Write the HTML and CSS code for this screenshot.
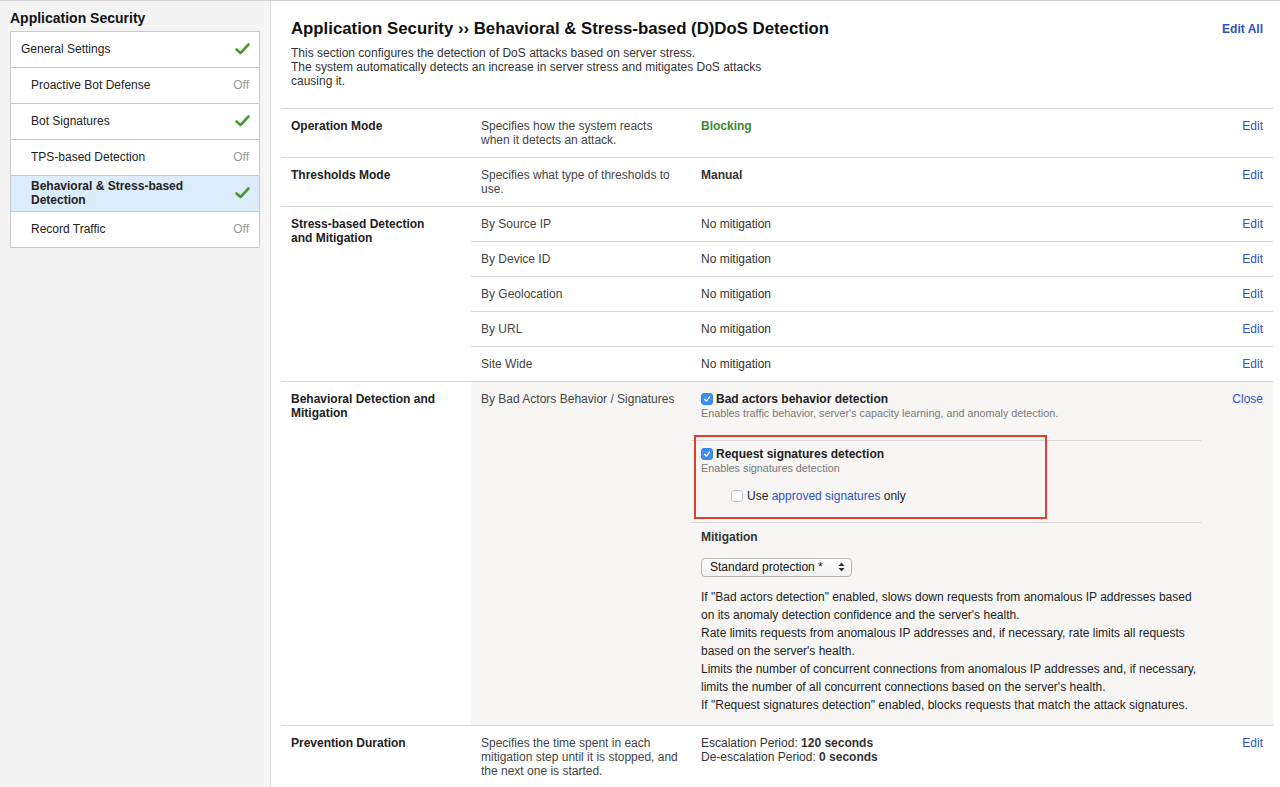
FILE: index.html
```html
<!DOCTYPE html>
<html>
<head>
<meta charset="utf-8">
<link rel="stylesheet" href="styles.css">
</head>
<body>
<div class="page">
  <aside class="sidebar">
    <h2 class="side-title">Application Security</h2>
    <ul class="nav">
      <li class="nav-item top"><span>General Settings</span><svg class="check" viewBox="0 0 15 12"><path d="M1.5 6.5 L5.5 10 L13.5 1.5"/></svg></li>
      <li class="nav-item"><span>Proactive Bot Defense</span><span class="off">Off</span></li>
      <li class="nav-item"><span>Bot Signatures</span><svg class="check" viewBox="0 0 15 12"><path d="M1.5 6.5 L5.5 10 L13.5 1.5"/></svg></li>
      <li class="nav-item"><span>TPS-based Detection</span><span class="off">Off</span></li>
      <li class="nav-item active"><span>Behavioral &amp; Stress-based<br>Detection</span><svg class="check" viewBox="0 0 15 12"><path d="M1.5 6.5 L5.5 10 L13.5 1.5"/></svg></li>
      <li class="nav-item"><span>Record Traffic</span><span class="off">Off</span></li>
    </ul>
  </aside>
  <main class="main">
    <header class="header">
      <div class="header-top">
        <h1 class="title">Application Security ›› Behavioral &amp; Stress-based (D)DoS Detection</h1>
        <a class="link bold">Edit All</a>
      </div>
      <p class="intro">This section configures the detection of DoS attacks based on server stress.<br>The system automatically detects an increase in server stress and mitigates DoS attacks causing it.</p>
    </header>
    <table class="settings">
      <colgroup><col class="c1"><col class="c2"><col class="c3"><col class="c4"></colgroup>
      <tr>
        <td class="label">Operation Mode</td>
        <td class="desc">Specifies how the system reacts when it detects an attack.</td>
        <td class="val"><span class="green bold">Blocking</span></td>
        <td class="act"><a class="link">Edit</a></td>
      </tr>
      <tr>
        <td class="label">Thresholds Mode</td>
        <td class="desc">Specifies what type of thresholds to use.</td>
        <td class="val"><span class="bold">Manual</span></td>
        <td class="act"><a class="link">Edit</a></td>
      </tr>
      <tr>
        <td class="label" rowspan="5">Stress-based Detection and Mitigation</td>
        <td class="desc">By Source IP</td>
        <td class="val">No mitigation</td>
        <td class="act"><a class="link">Edit</a></td>
      </tr>
      <tr>
        <td class="desc">By Device ID</td>
        <td class="val">No mitigation</td>
        <td class="act"><a class="link">Edit</a></td>
      </tr>
      <tr>
        <td class="desc">By Geolocation</td>
        <td class="val">No mitigation</td>
        <td class="act"><a class="link">Edit</a></td>
      </tr>
      <tr>
        <td class="desc">By URL</td>
        <td class="val">No mitigation</td>
        <td class="act"><a class="link">Edit</a></td>
      </tr>
      <tr>
        <td class="desc">Site Wide</td>
        <td class="val">No mitigation</td>
        <td class="act"><a class="link">Edit</a></td>
      </tr>
      <tr class="expanded">
        <td class="label">Behavioral Detection and Mitigation</td>
        <td class="desc shaded">By Bad Actors Behavior / Signatures</td>
        <td class="val shaded panel">
          <div class="sec sec1">
            <div class="cb-line"><span class="cb on"><svg viewBox="0 0 12 12"><path d="M3 6.3 L5.2 8.5 L9.2 3.5"/></svg></span><span class="bold">Bad actors behavior detection</span></div>
            <div class="hint">Enables traffic behavior, server's capacity learning, and anomaly detection.</div>
          </div>
          <div class="sec sec2">
            <div class="highlight"></div>
            <div class="cb-line"><span class="cb on"><svg viewBox="0 0 12 12"><path d="M3 6.3 L5.2 8.5 L9.2 3.5"/></svg></span><span class="bold">Request signatures detection</span></div>
            <div class="hint">Enables signatures detection</div>
            <div class="cb-line sub"><span class="cb"></span><span>Use <a class="link">approved signatures</a> only</span></div>
          </div>
          <div class="sec sec3">
            <div class="bold">Mitigation</div>
            <div class="select"><span>Standard protection *</span><svg class="arrows" viewBox="0 0 7 10"><path d="M3.5 0.5 L6.5 4 H0.5 Z M3.5 9.5 L6.5 6 H0.5 Z"/></svg></div>
            <p class="mit-text">If "Bad actors detection" enabled, slows down requests from anomalous IP addresses based on its anomaly detection confidence and the server's health.<br>Rate limits requests from anomalous IP addresses and, if necessary, rate limits all requests based on the server's health.<br>Limits the number of concurrent connections from anomalous IP addresses and, if necessary, limits the number of all concurrent connections based on the server's health.<br>If "Request signatures detection" enabled, blocks requests that match the attack signatures.</p>
          </div>
        </td>
        <td class="act shaded"><a class="link">Close</a></td>
      </tr>
      <tr>
        <td class="label">Prevention Duration</td>
        <td class="desc">Specifies the time spent in each mitigation step until it is stopped, and the next one is started.</td>
        <td class="val">Escalation Period: <span class="bold">120 seconds</span><br>De-escalation Period: <span class="bold">0 seconds</span></td>
        <td class="act"><a class="link">Edit</a></td>
      </tr>
    </table>
  </main>
</div>
</body>
</html>
```
FILE: styles.css
```css
* { box-sizing: border-box; }
html, body { margin: 0; padding: 0; }
body {
  font-family: "Liberation Sans", Arial, Helvetica, sans-serif;
  font-size: 12px;
  line-height: 14px;
  color: #222;
  background: #fff;
  border-top: 1px solid #cfcfcf;
  height: 787px;
  overflow: hidden;
}
.page { display: flex; height: 786px; }
.sidebar {
  width: 271px;
  flex: none;
  background: #f4f4f4;
  border-right: 1px solid #dcdcdc;
  padding: 9px 10px;
}
.side-title {
  margin: 0 0 4px;
  font-size: 14px;
  line-height: 17px;
  font-weight: bold;
  color: #111;
}
.nav {
  list-style: none;
  margin: 0;
  padding: 0;
  background: #fff;
  border: 1px solid #c9c9c9;
  border-bottom: none;
}
.nav-item {
  display: flex;
  align-items: center;
  justify-content: space-between;
  min-height: 36px;
  padding: 0 10px 1px 20px;
  border-bottom: 1px solid #c9c9c9;
  color: #222;
}
.nav-item.top { padding-left: 10px; }
.nav-item.active { background: #dcecfb; font-weight: bold; }
.off { color: #999; }
.check { width: 15px; height: 12px; margin-right: -1px; }
.check path { fill: none; stroke: #4a9a32; stroke-width: 2.6; stroke-linecap: round; stroke-linejoin: round; }

.main { flex: 1; padding: 0 7px 0 10px; }
.header { padding: 17px 10px 0; }
.header-top { display: flex; justify-content: space-between; align-items: center; }
.title {
  margin: 0;
  font-size: 16.8px;
  line-height: 22px;
  font-weight: bold;
  color: #111;
}
.intro {
  margin: 6px 0 20px;
  max-width: 490px;
  color: #333;
}
.link { color: #2f52c4; text-decoration: none; cursor: pointer; }
.bold { font-weight: bold; }
.green { color: #3b8a2c; }

.settings {
  width: 992px;
  border-collapse: collapse;
  table-layout: fixed;
}
.c1 { width: 190px; }
.c2 { width: 220px; }
.c3 { width: 510px; }
.c4 { width: 72px; }
.settings td {
  border-top: 1px solid #d6d6d6;
  vertical-align: top;
  padding: 10px;
}
.settings td.label { font-weight: bold; color: #222; padding-right: 30px; }
.desc { color: #444; }
.val { color: #333; }
.act { text-align: right; }
.shaded { background: #f7f6f5; }
.settings td.panel { padding: 10px 0 11px; }
.sec { padding-left: 10px; }
.sec1 { padding-bottom: 20px; }
.sec2 { position: relative; border-top: 1px solid #d6d6d6; padding-top: 6px; padding-bottom: 19px; }
.sec3 { border-top: 1px solid #d6d6d6; padding-top: 7px; }
.highlight {
  position: absolute;
  top: -6px;
  left: 3px;
  width: 353px;
  height: 84px;
  border: 2px solid #e2402e;
  pointer-events: none;
}
.cb-line { display: flex; align-items: center; gap: 3px; color: #222; }
.cb-line.sub { margin-top: 14px; padding-left: 30px; gap: 4px; }
.cb {
  width: 12px; height: 12px;
  border-radius: 3px;
  border: 1px solid #c4c4c4;
  background: #fff;
  display: inline-flex;
  flex: none;
}
.cb.on { background: #3d8df5; border-color: #3582ea; }
.cb svg { width: 10px; height: 10px; }
.cb path { fill: none; stroke: #fff; stroke-width: 1.6; stroke-linecap: round; stroke-linejoin: round; }
.hint { font-size: 10.8px; color: #777; }
.select {
  margin-top: 14px;
  width: 151px;
  height: 19px;
  border: 1px solid #b5b5b5;
  border-radius: 4px;
  background: linear-gradient(#ffffff, #f1f1f1);
  display: flex;
  align-items: center;
  justify-content: space-between;
  padding: 0 6px 1px 8px;
  color: #111;
}
.arrows { width: 7px; height: 10px; }
.arrows path { fill: #333; }
.mit-text {
  margin: 11px 0 0;
  line-height: 18px;
  color: #222;
  padding-right: 4px;
}
```
